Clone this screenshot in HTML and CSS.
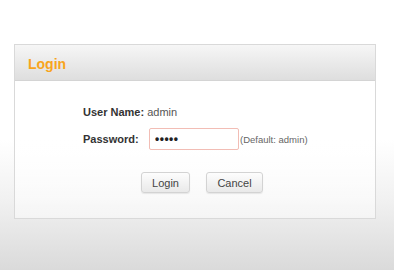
FILE: index.html
```html
<!DOCTYPE html>
<html>
<head>
<meta charset="utf-8">
<link rel="stylesheet" href="styles.css">
</head>
<body>
<div class="page">
  <div class="panel">
    <div class="panel-head"><span class="title">Login</span></div>
    <div class="panel-body">
      <div class="row user-row"><span class="label">User Name:</span> <span class="value">admin</span></div>
      <div class="row pass-row">
        <span class="label pass-label">Password:</span>
        <input class="pass" type="password" value="admin">
        <span class="hint">(Default: admin)</span>
      </div>
      <div class="actions">
        <button class="btn btn-login">Login</button>
        <button class="btn btn-cancel">Cancel</button>
      </div>
    </div>
  </div>
</div>
</body>
</html>
```
FILE: styles.css
```css
html, body {
  margin: 0;
  padding: 0;
}
body {
  width: 394px;
  height: 270px;
  overflow: hidden;
  font-family: "Liberation Sans", Arial, sans-serif;
  background: linear-gradient(to bottom, #ffffff 0px, #ffffff 140px, #f1f1f1 200px, #dadada 270px);
}
.page {
  padding: 44px 0 0 14px;
}
.panel {
  width: 360px;
  border: 1px solid #d9d9d9;
  background: linear-gradient(to bottom, rgba(255,255,255,1) 0%, rgba(255,255,255,1) 50%, rgba(255,255,255,0.45) 100%);
}
.panel-head {
  height: 35px;
  line-height: 37px;
  padding-left: 13px;
  background: linear-gradient(to bottom, #f6f6f6, #dedede);
  border-bottom: 1px solid #d4d4d4;
}
.title {
  color: #f8a41c;
  font-weight: bold;
  font-size: 14px;
}
.panel-body {
  padding: 23px 0 25px 68px;
  font-size: 11px;
  color: #333;
}
.row {
  display: flex;
  align-items: center;
}
.user-row {
  height: 16px;
}
.label {
  font-weight: bold;
  color: #333;
}
.value {
  margin-left: 3px;
  color: #555;
}
.pass-row {
  margin-top: 8px;
  height: 22px;
}
.pass-label {
  width: 66px;
}
.pass {
  box-sizing: border-box;
  width: 90px;
  height: 22px;
  margin: 0;
  padding: 0 5px;
  border: 1px solid #f2bdb5;
  border-radius: 2px;
  background: #fff;
  font-family: "Liberation Sans", Arial, sans-serif;
  font-size: 12px;
  font-weight: bold;
  letter-spacing: 0.5px;
  color: #222;
  outline: none;
}
.hint {
  margin-left: 1px;
  font-size: 9.5px;
  color: #666;
}
.actions {
  display: flex;
  gap: 16px;
  margin-top: 22px;
  padding-left: 58px;
}
.btn {
  box-sizing: border-box;
  height: 21px;
  margin: 0;
  padding: 0;
  border: 1px solid #d3d3d3;
  border-radius: 3px;
  background: linear-gradient(to bottom, #fdfdfd, #e9e9e9);
  box-shadow: 0 1px 1px rgba(0,0,0,0.08);
  font-family: "Liberation Sans", Arial, sans-serif;
  font-size: 11px;
  color: #444;
}
.btn-login {
  width: 49px;
}
.btn-cancel {
  width: 57px;
}
```
